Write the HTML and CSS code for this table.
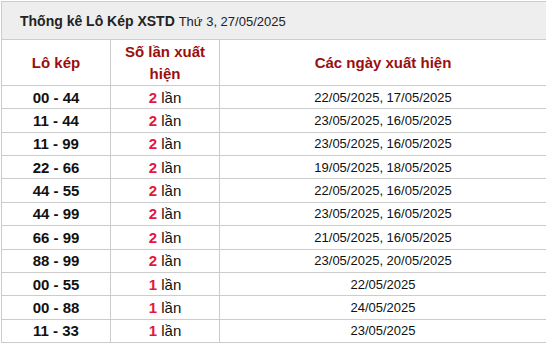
FILE: index.html
```html
<!DOCTYPE html>
<html lang="vi">
<head>
<meta charset="utf-8">
<title>Thống kê Lô Kép XSTD</title>
<link rel="stylesheet" href="styles.css">
</head>
<body>
<div class="stats">
  <div class="title"><span><b>Thống kê Lô Kép XSTD</b> <span class="date">Thứ 3, 27/05/2025</span></span></div>
  <div class="head">Lô kép</div>
  <div class="head">Số lần xuất hiện</div>
  <div class="head">Các ngày xuất hiện</div>

  <div class="pair">00 - 44</div><div class="count"><span><b>2</b> lần</span></div><div class="dates">22/05/2025, 17/05/2025</div>
  <div class="pair">11 - 44</div><div class="count"><span><b>2</b> lần</span></div><div class="dates">23/05/2025, 16/05/2025</div>
  <div class="pair">11 - 99</div><div class="count"><span><b>2</b> lần</span></div><div class="dates">23/05/2025, 16/05/2025</div>
  <div class="pair">22 - 66</div><div class="count"><span><b>2</b> lần</span></div><div class="dates">19/05/2025, 18/05/2025</div>
  <div class="pair">44 - 55</div><div class="count"><span><b>2</b> lần</span></div><div class="dates">22/05/2025, 16/05/2025</div>
  <div class="pair">44 - 99</div><div class="count"><span><b>2</b> lần</span></div><div class="dates">23/05/2025, 16/05/2025</div>
  <div class="pair">66 - 99</div><div class="count"><span><b>2</b> lần</span></div><div class="dates">21/05/2025, 16/05/2025</div>
  <div class="pair">88 - 99</div><div class="count"><span><b>2</b> lần</span></div><div class="dates">23/05/2025, 20/05/2025</div>
  <div class="pair">00 - 55</div><div class="count"><span><b>1</b> lần</span></div><div class="dates">22/05/2025</div>
  <div class="pair">00 - 88</div><div class="count"><span><b>1</b> lần</span></div><div class="dates">24/05/2025</div>
  <div class="pair">11 - 33</div><div class="count"><span><b>1</b> lần</span></div><div class="dates">23/05/2025</div>
</div>
</body>
</html>
```
FILE: styles.css
```css
html, body {
  margin: 0;
  padding: 0;
  overflow: hidden;
  background: #fff;
}
body {
  font-family: "Liberation Sans", Arial, sans-serif;
  color: #111;
}
.stats {
  margin: 1px 0 0 1px;
  width: 546px;
  box-sizing: border-box;
  border: 1px solid #cccccc;
  background: #cccccc;
  display: grid;
  grid-template-columns: 108px 108px 326px;
  grid-template-rows: 37px 45px repeat(11, 22.36px);
  gap: 1px;
}
.stats > div {
  background: #fff;
  display: flex;
  align-items: center;
  justify-content: center;
  text-align: center;
}
.stats > .title {
  grid-column: 1 / 4;
  background: #eeeeee;
  justify-content: flex-start;
  padding-left: 18px;
  font-size: 14px;
  color: #222;
}
.title .date {
  font-size: 13px;
}
.stats > .head {
  font-size: 15px;
  font-weight: bold;
  color: #9a0e0e;
  line-height: 22px;
  padding: 0 12px;
}
.pair {
  font-size: 15px;
  font-weight: bold;
  color: #111;
}
.count {
  font-size: 15px;
  color: #111;
}
.count b {
  color: #e3173e;
}
.dates {
  font-size: 13px;
  color: #111;
}
```
